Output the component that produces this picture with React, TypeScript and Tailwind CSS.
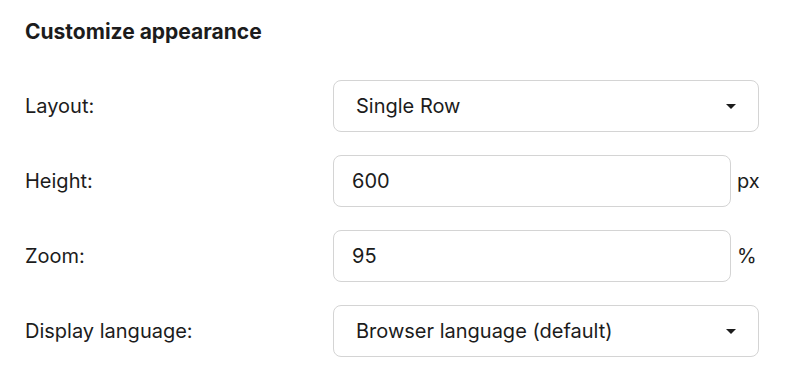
const rows = [
  { label: "Layout:", kind: "select", value: "Single Row" },
  { label: "Height:", kind: "input", value: "600", unit: "px" },
  { label: "Zoom:", kind: "input", value: "95", unit: "%" },
  { label: "Display language:", kind: "select", value: "Browser language (default)" },
];

function Caret() {
  return (
    <svg width="10" height="5" viewBox="0 0 10 5" className="shrink-0">
      <path d="M0 0h10L5 5z" fill="#1c1c1c" />
    </svg>
  );
}

export default function App() {
  return (
    <div className="w-[810px] h-[374px] bg-white text-[#1c1c1c] font-['Inter',sans-serif] pl-[25px] pt-[19px]">
      <h2 className="text-[21px] font-bold leading-[26px]">Customize appearance</h2>
      <div className="mt-[35px] flex flex-col gap-[23px]">
        {rows.map((row) => (
          <div key={row.label} className="flex items-center">
            <div className="w-[308px] text-[20px]">{row.label}</div>
            {row.kind === "select" ? (
              <div className="w-[426px] h-[52px] border border-[#d4d4d4] rounded-[8px] flex items-center justify-between pl-[22px] pr-[22px] text-[20px]">
                <span>{row.value}</span>
                <Caret />
              </div>
            ) : (
              <div className="flex items-center">
                <div className="w-[398px] h-[52px] border border-[#d4d4d4] rounded-[8px] flex items-center pl-[18px] text-[20px]">
                  {row.value}
                </div>
                <span className="ml-[6px] text-[20px]">{row.unit}</span>
              </div>
            )}
          </div>
        ))}
      </div>
    </div>
  );
}
